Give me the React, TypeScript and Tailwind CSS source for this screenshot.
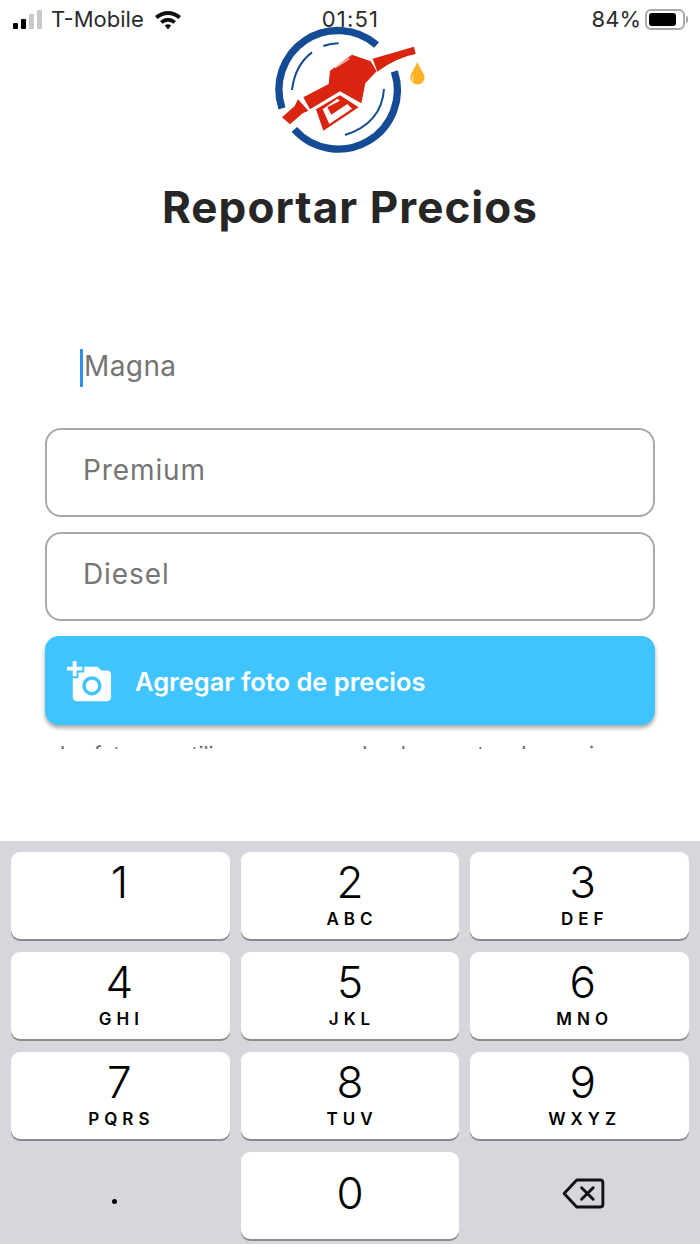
const font = { fontFamily: 'Inter, "Liberation Sans", sans-serif' };

function Logo() {
  return (
    <svg width="180" height="140" viewBox="0 0 540 420" fill="none" className="shrink-0">
      <g stroke="#144b94" strokeLinecap="butt">
        <path d="M350 75 A177 177 0 0 0 66 265" strokeWidth="22" />
        <path d="M103 328 A177 177 0 0 0 403 154" strokeWidth="22" />
        <path d="M190 78 Q212 70 236 70" strokeWidth="6" />
        <path d="M156 97 Q105 135 96 210" strokeWidth="6" />
        <path d="M372 207 Q365 310 255 345" strokeWidth="6" />
      </g>
      <g fill="#d9240f">
        <path d="M66 292 L104 258 L114 238 L145 272 L128 280 L90 313 Z" />
        <path d="M130 232 L206 192 L210 152 L276 104 L332 124 L350 154 L316 190 L304 250 L240 214 L150 268 Z" />
        <path fillRule="evenodd" d="M168 268 L240 226 L296 262 L190 332 Z M188 268 L208 312 L276 266 L262 252 L214 284 L202 262 L240 242 L232 236 Z" />
        <path d="M338 116 Q400 98 462 80 L467 102 Q410 112 352 155 Z" />
      </g>
      <path d="M225 143 L268 116" stroke="#fff" strokeWidth="4" opacity="0.75" />
      <path d="M362 104 L412 92" stroke="#fff" strokeWidth="4" strokeDasharray="9 3" opacity="0.8" />
      <path d="M472 125 C462 150 451 160 451 172 A21 21 0 0 0 494 172 C494 160 482 150 472 125 Z" fill="#fbb323" />
      <path d="M459 166 Q455 176 460 184" stroke="#fff" strokeWidth="3" opacity="0.8" />
    </svg>
  );
}

function StatusBar() {
  return (
    <div className="absolute top-0 left-0 right-0 h-[38px] flex items-center justify-between pl-[13px] pr-[12px] text-[#2b2b2b] text-[22px] leading-none">
      <div className="flex items-center w-[260px]">
        <div className="flex items-end gap-[3px] mr-[9px] h-[20px]">
          <span className="w-[5px] h-[6px] bg-black rounded-[1px]" />
          <span className="w-[5px] h-[10px] bg-black rounded-[1px]" />
          <span className="w-[5px] h-[15px] bg-[#c9c9c9] rounded-[1px]" />
          <span className="w-[5px] h-[19px] bg-[#c9c9c9] rounded-[1px]" />
        </div>
        <span className="mr-[10px]">T-Mobile</span>
        <svg width="28" height="21" viewBox="0 0 28 21">
          <path d="M1 7 Q14 -3 27 7 L24.5 10 Q14 2 3.5 10 Z" fill="#111" />
          <path d="M6 12 Q14 5.5 22 12 L19.5 14.8 Q14 10.5 8.5 14.8 Z" fill="#111" />
          <path d="M10.8 16.6 Q14 14 17.2 16.6 L14 20.5 Z" fill="#111" />
        </svg>
      </div>
      <span className="tracking-[1.2px]">01:51</span>
      <div className="flex items-center justify-end w-[260px]">
        <span className="mr-[4px]">84%</span>
        <div className="w-[40px] h-[21px] border-2 border-[#a8a8a8] rounded-[6px] p-[2px]">
          <div className="w-[85%] h-full bg-black rounded-[3px]" />
        </div>
        <div className="w-[2px] h-[7px] bg-[#a8a8a8] rounded-r-sm ml-[1px]" />
      </div>
    </div>
  );
}

function Field({ label }: { label: string }) {
  return (
    <div className="h-[89px] border-2 border-[#a8a8a8] rounded-[16px] flex items-center pl-[36px] pb-[5px] text-[28px] tracking-[0.9px] text-[#757575]">
      {label}
    </div>
  );
}

function Key({ n, l, className }: { n: string; l?: string; className?: string }) {
  return (
    <div className={"h-[87px] bg-white rounded-[9px] shadow-[0_2px_0_#8a8b8f] flex flex-col items-center text-black " + (className ?? "")}>
      <span className="text-[44px] leading-[60px] font-light">{n}</span>
      {l ? <span className="text-[17px] leading-[16px] mt-[-1px] font-semibold tracking-[5px] pl-[4px]">{l}</span> : null}
    </div>
  );
}

export default function App() {
  return (
    <div className="w-[700px] h-[1244px] bg-white flex flex-col overflow-hidden relative" style={font}>
      <StatusBar />
      <main className="h-[841px] shrink-0 flex flex-col items-stretch px-[45px] pt-[20px]">
        <div className="flex justify-center relative z-10"><Logo /></div>
        <h1 className="text-center text-[44px] leading-[54px] font-bold text-[#262626] tracking-[1.05px] mt-[20px]">Reportar Precios</h1>
        <div className="h-[89px] mt-[90px] mb-[15px] flex items-center pl-[35px] pb-[5px] text-[28px] tracking-[0.4px] text-[#757575]">
          <span className="w-[3px] h-[38px] bg-[#2f8fee] mr-[1px] mt-[3px]" />
          Magna
        </div>
        <div className="flex flex-col gap-[15px]">
          <Field label="Premium" />
          <Field label="Diesel" />
        </div>
        <div className="h-[89px] mt-[15px] bg-[#40c4ff] rounded-[14px] shadow-[0_3px_4px_rgba(0,0,0,0.35)] flex items-center pl-[22px] text-white text-[25.5px] font-semibold">
          <svg width="46" height="46" viewBox="0 0 24 24" fill="#fff" className="mr-[22px] shrink-0 mt-[3px]">
            <path d="M3 4V1h2v3h3v2H5v3H3V6H0V4h3zm3 6V7h3V4h7l1.83 2H21c1.1 0 2 .9 2 2v12c0 1.1-.9 2-2 2H5c-1.1 0-2-.9-2-2V10h3zm7 9c2.76 0 5-2.24 5-5s-2.24-5-5-5-5 2.24-5 5 2.24 5 5 5zm-3.2-5c0 1.77 1.43 3.2 3.2 3.2s3.2-1.43 3.2-3.2-1.43-3.2-3.2-3.2-3.2 1.43-3.2 3.2z" />
          </svg>
          <span className="mt-[4px]">Agregar foto de precios</span>
        </div>
        <div className="h-[7px] mt-[17px] pt-[2px] pl-[15px] overflow-hidden">
          <p className="text-[21px] leading-[21px] text-[#666] whitespace-nowrap">las fotos se utilizan como prueba de reportes de precios</p>
        </div>
      </main>
      <section className="flex-1 bg-[#d6d7dc] px-[11px] pt-[11px] grid grid-cols-3 gap-x-[11px] gap-y-[13px] content-start">
        <Key n="1" className="pr-[2px]" />
        <Key n="2" l="ABC" />
        <Key n="3" l="DEF" className="pl-[6px]" />
        <Key n="4" l="GHI" className="pr-[2px]" />
        <Key n="5" l="JKL" />
        <Key n="6" l="MNO" className="pl-[6px]" />
        <Key n="7" l="PQRS" className="pr-[2px]" />
        <Key n="8" l="TUV" />
        <Key n="9" l="WXYZ" className="pl-[6px]" />
        <div className="h-[87px] flex items-center justify-center pr-[12px] pt-[12px]">
          <span className="w-[5px] h-[5px] rounded-full bg-black" />
        </div>
        <Key n="0" className="pt-[11px]" />
        <div className="h-[87px] flex items-center justify-center pl-[8px] pb-[5px]">
          <svg width="43" height="31" viewBox="0 0 44 32" fill="none" stroke="#111" strokeWidth="3" strokeLinejoin="round" strokeLinecap="round">
            <path d="M15 2 H39 Q42 2 42 5 V27 Q42 30 39 30 H15 L2 16 Z" />
            <path d="M20 10 L32 22 M32 10 L20 22" />
          </svg>
        </div>
      </section>
    </div>
  );
}
